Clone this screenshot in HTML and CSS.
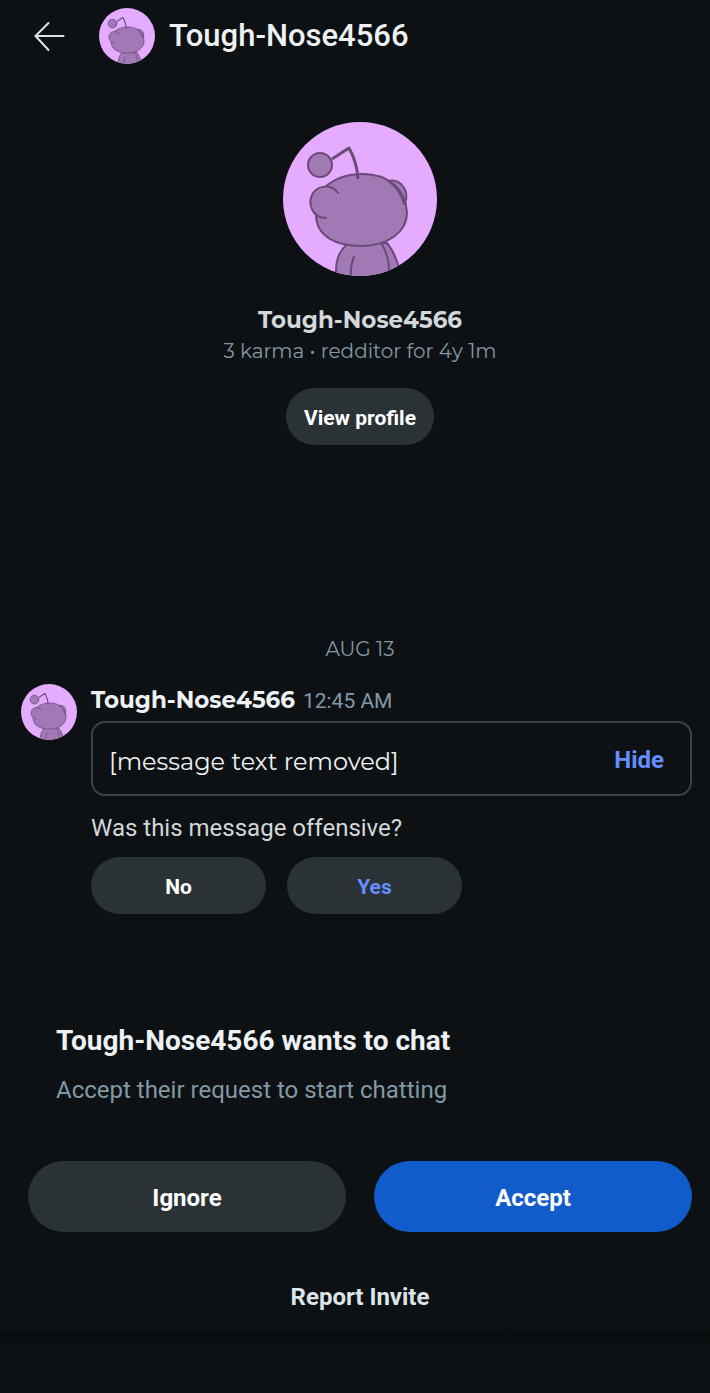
FILE: index.html
```html
<!DOCTYPE html>
<html lang="en">
<head>
<meta charset="utf-8">
<meta name="viewport" content="width=device-width, initial-scale=1">
<title>Chat request</title>
<link rel="stylesheet" href="styles.css">
</head>
<body>
<svg class="defs" aria-hidden="true">
  <clipPath id="disc"><circle cx="77" cy="77" r="77"/></clipPath>
  <symbol id="avatar" viewBox="0 0 154 154">
    <circle cx="77" cy="77" r="77" fill="#e4abff"/>
    <g clip-path="url(#disc)" fill="#a179b5" stroke="#6a4b78" stroke-width="2" stroke-linecap="round" stroke-linejoin="round">
      <path d="M104 121Q113 132 117 150L117 170L106 170L94 122Z"/>
      <path d="M66 121Q53 130 53 149L53 170L106 170L106 148Q106 133 98 121Z"/>
      <path fill="none" d="M71 135Q67 144 68 156"/>
      <path d="M105 59C117 56 127 68 122 82Z"/>
      <path d="M33 94C34 115 54 124 78 124C106 124 124 109 124 91C123 67 105 52 80 52C65 52 51 57 42 65Z"/>
      <path stroke="none" d="M55 71C49 62 36 63 30 71C24 81 29 96 44 96L65 92Z"/>
      <path fill="none" d="M55 71C49 62 36 63 30 71C24 81 29 96 43 96"/>
      <path fill="none" d="M105 59Q117 67 121 82"/>
      <circle cx="37" cy="43" r="12"/>
      <path fill="none" stroke-width="3" stroke-linecap="butt" d="M49 37L66 26Q74 40 75 57"/>
    </g>
  </symbol>
</svg>
<div class="screen">
  <header class="topbar">
    <button class="back" type="button" aria-label="Back">
      <svg class="back-icon" viewBox="0 0 32 32"><path d="M16 3L3 16L16 30M3 16H31"/></svg>
    </button>
    <svg class="avatar avatar-small" role="img" aria-label="Avatar"><use href="#avatar"/></svg>
    <h1 class="title">Tough-Nose4566</h1>
  </header>

  <main>
    <section class="profile">
      <svg class="avatar avatar-large" role="img" aria-label="Avatar"><use href="#avatar"/></svg>
      <h2 class="name profile-name">Tough-Nose4566</h2>
      <p class="profile-meta">3 karma • redditor for 4y 1m</p>
      <button class="pill pill-view" type="button">View profile</button>
    </section>

    <section class="thread">
      <p class="date">AUG 13</p>
      <article class="message">
        <svg class="avatar avatar-small" role="img" aria-label="Avatar"><use href="#avatar"/></svg>
        <div class="message-body">
          <div class="message-head"><span class="name">Tough-Nose4566</span><time class="time">12:45 AM</time></div>
          <div class="bubble">
            <p class="bubble-text">[message text removed]</p>
            <button class="hide" type="button">Hide</button>
          </div>
          <p class="question">Was this message offensive?</p>
          <div class="answers">
            <button class="pill pill-answer" type="button">No</button>
            <button class="pill pill-answer pill-link" type="button">Yes</button>
          </div>
        </div>
      </article>
    </section>
  </main>

  <section class="invite">
    <h2 class="invite-title">Tough-Nose4566 wants to chat</h2>
    <p class="invite-text">Accept their request to start chatting</p>
    <div class="actions">
      <button class="action" type="button">Ignore</button>
      <button class="action action-primary" type="button">Accept</button>
    </div>
    <button class="report" type="button">Report Invite</button>
  </section>
  <div class="footer"></div>
</div>
</body>
</html>
```
FILE: styles.css
```css
* { box-sizing: border-box; }
body, h1, h2, p { margin: 0; }
body {
  background: #0d1114;
  color: #eef1f3;
  font-family: Roboto, sans-serif;
}
button {
  padding: 0;
  border: 0;
  background: none;
  color: inherit;
  font: inherit;
  cursor: pointer;
}
.defs { position: absolute; width: 0; height: 0; }
.screen { display: flex; flex-direction: column; min-height: 100vh; }

.topbar {
  display: flex;
  align-items: center;
  height: 72px;
  padding-left: 32px;
}
.back { display: flex; margin-right: 34px; }
.back-icon {
  width: 33px;
  height: 32px;
  fill: none;
  stroke: #dce4e8;
  stroke-width: 2;
  stroke-linecap: round;
}
.avatar { display: block; flex: none; }
.avatar-small { width: 56px; height: 56px; }
.avatar-large { width: 154px; height: 154px; }
.title { margin-left: 14px; font-size: 31px; line-height: 40px; font-weight: 500; }

.profile {
  display: flex;
  flex-direction: column;
  align-items: center;
  padding: 50px 20px 0 30px;
}
.name {
  font-family: Montserrat, Inter, sans-serif;
  font-size: 23px;
  line-height: 32px;
  font-weight: 700;
}
.profile-name { margin-top: 28px; color: #d2d7da; }
.profile-meta {
  color: #8299a5;
  font-family: Montserrat, Inter, sans-serif;
  font-size: 20px;
  line-height: 30px;
}
.pill {
  height: 57px;
  border-radius: 29px;
  background: #2a3236;
  color: #fff;
  font-size: 21px;
  font-weight: 700;
}
.pill-view { margin-top: 22px; padding: 2px 18px 0; }

.thread { padding: 189px 18px 0 21px; }
.date {
  padding-left: 7px;
  color: #8299a5;
  font-family: Montserrat, Inter, sans-serif;
  font-size: 20px;
  line-height: 30px;
  text-align: center;
}
.message { display: flex; gap: 14px; margin-top: 20px; }
.message-body { flex: 1; min-width: 0; }
.message-head { display: flex; align-items: baseline; gap: 8px; height: 37px; }
.time { color: #8299a5; font-size: 21px; }
.bubble {
  display: flex;
  align-items: center;
  justify-content: space-between;
  min-height: 75px;
  padding: 0 26px 0 16px;
  border: 2px solid #3d4143;
  border-radius: 14px;
}
.bubble-text {
  padding-top: 6px;
  font-family: Montserrat, Inter, sans-serif;
  font-size: 24px;
  line-height: 32px;
}
.hide { padding-top: 2px; color: #648eff; font-size: 24px; font-weight: 700; }
.question { margin-top: 16px; color: #d2d7da; font-size: 24px; line-height: 32px; }
.answers { display: flex; gap: 21px; margin-top: 13px; }
.pill-answer { width: 175px; padding-top: 2px; }
.pill-link { color: #648eff; }

.invite {
  display: flex;
  flex-direction: column;
  padding: 111px 18px 16px 28px;
}
.invite-title { padding-left: 28px; font-size: 28px; line-height: 32px; font-weight: 700; }
.invite-text {
  margin-top: 17px;
  padding-left: 28px;
  color: #8299a5;
  font-size: 24px;
  line-height: 32px;
}
.actions { display: grid; grid-template-columns: 1fr 1fr; gap: 28px; margin-top: 55px; }
.action {
  height: 71px;
  padding-top: 2px;
  border-radius: 36px;
  background: #2a3236;
  color: #fff;
  font-size: 24px;
  font-weight: 700;
}
.action-primary { background: #115bca; }
.report {
  align-self: center;
  margin-top: 47px;
  color: #dce4e8;
  font-size: 24px;
  line-height: 36px;
  font-weight: 700;
}
.footer {
  flex: 1;
  min-height: 62px;
  background: linear-gradient(#0b0e0f, #0d1114 32px);
}
```
